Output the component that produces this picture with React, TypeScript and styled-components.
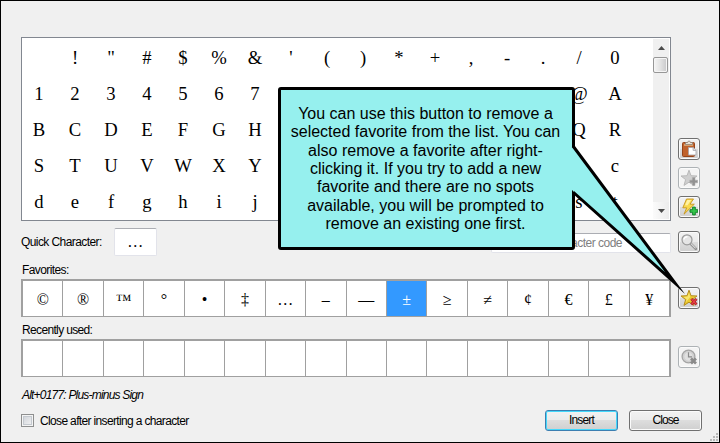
import React from "react";
import styled, { createGlobalStyle, css } from "styled-components";

const GlobalStyle = createGlobalStyle`
  *, *::before, *::after { box-sizing: border-box; }
  body { margin: 0; background: #f0f0f0; }
`;

const Dialog = styled.div`
  position: relative;
  width: 720px;
  height: 443px;
  padding: 36px 0 0 20px;
  overflow: hidden;
  border: 1px solid #000;
  background: #f0f0f0;
  color: #000;
  font: 12px/14px "Liberation Sans", Arial, sans-serif;
`;

const Row = styled.div<{ $height: number }>`
  display: grid;
  grid-template-columns: 650px 22px;
  column-gap: 7px;
  height: ${(p) => p.$height}px;
`;

const CharacterPanel = styled.div`
  display: grid;
  grid-template-columns: 1fr 16px;
  grid-template-rows: 180px;
  height: 184px;
  padding: 1px 1px 1px 0;
  overflow: hidden;
  border: 1px solid #828790;
  background: #fff;
`;

const CharacterGrid = styled.div`
  display: grid;
  grid-template-columns: repeat(17, 36px);
  grid-auto-rows: 36px;
  margin-left: -1px;
  font: 18.67px/37px "Liberation Serif", "Times New Roman", serif;
  text-align: center;
`;

const Scrollbar = styled.div`
  display: flex;
  flex-direction: column;
  background: #f0f0f0;
`;

const ArrowBox = styled.div<{ $bottom?: boolean }>`
  display: grid;
  place-items: center;
  height: 17px;
  ${(p) =>
    p.$bottom &&
    css`
      margin-top: auto;
      background: linear-gradient(90deg, #fbfbfb, #ececec);
    `}
`;

const Thumb = styled.div`
  width: 15px;
  height: 16px;
  margin-top: 1px;
  border: 1px solid #979797;
  border-radius: 2px;
  background: linear-gradient(90deg, #f5f5f5, #e2e2e2 50%, #c8c8ca);
  box-shadow: inset 0 0 0 1px #f5f5f5;
`;

const ToolColumn = styled.div`
  display: flex;
  flex-direction: column;
  gap: 7px;
  padding-top: 101px;
`;

const ToolButton = styled.button<{ $disabled?: boolean; $top?: number }>`
  display: grid;
  place-items: center;
  width: 22px;
  height: 22px;
  margin: ${(p) => p.$top ?? 0}px 0 0;
  padding: 0;
  border: 1px solid ${(p) => (p.$disabled ? "#adb2b5" : "#707070")};
  border-radius: 3px;
  background: ${(p) =>
    p.$disabled ? "#f4f4f4" : "linear-gradient(#f2f2f2, #ebebeb 50%, #dddddd 50%, #cfcfcf)"};
  box-shadow: inset 0 0 0 1px #fbfbfb;
  svg { display: block; width: 18px; height: 18px; }
`;

const Text = styled.span<{ $spacing: number; $italic?: boolean }>`
  letter-spacing: ${(p) => p.$spacing}px;
  font-style: ${(p) => (p.$italic ? "italic" : "normal")};
  white-space: nowrap;
`;

const QuickRow = styled.div`
  display: flex;
  align-items: center;
  height: 28px;
  margin-top: 7px;
`;

const QuickBox = styled.div`
  width: 43px;
  height: 28px;
  margin-left: 12px;
  border: 1px solid #e2e3ea;
  border-top-color: #abadb3;
  border-radius: 2px;
  background: #fff;
  font: 16px/25px "Liberation Serif", "Times New Roman", serif;
  text-align: center;
`;

const CodeInput = styled.div`
  width: 180px;
  height: 20px;
  margin: 2px 0 0 auto;
  padding: 2px 48px 0 0;
  border: 1px solid #e2e3ea;
  border-top-color: #abadb3;
  border-radius: 2px;
  background: #fff;
  color: #808080;
  text-align: right;
`;

const Strip = styled.div`
  display: grid;
  grid-template-columns: repeat(16, 1fr);
  grid-template-rows: 35px;
  gap: 1px;
  height: 38px;
  border: 1px solid #a0a0a0;
  border-width: 2px 2px 1px;
  background: #a0a0a0;
`;

const Cell = styled.div<{ $selected?: boolean }>`
  overflow: hidden;
  background: ${(p) => (p.$selected ? "#3399ff" : "#fff")};
  color: ${(p) => (p.$selected ? "#fff" : "#000")};
  font: 16px/37px "Liberation Serif", "Times New Roman", serif;
  text-align: center;
`;

const SectionLabel = styled.div<{ $height: number; $top: number }>`
  height: ${(p) => p.$height}px;
  padding: ${(p) => p.$top}px 0 0 1px;
`;

const Footer = styled.div`
  display: flex;
  align-items: center;
  width: 681px;
  height: 22px;
  margin-top: 6px;
`;

const CheckBox = styled.span`
  width: 13px;
  height: 13px;
  margin: 1px 6px 0 0;
  border: 1px solid #8e8f8f;
  background: linear-gradient(135deg, #cbcfd5, #f6f6f6);
  box-shadow: inset 0 0 0 1px #f4f4f4, inset 0 0 0 2px #c4c9cf;
`;

const CheckText = styled(Text)`
  padding-top: 2px;
`;

const PushButton = styled.button<{ $primary?: boolean }>`
  width: 73px;
  height: 21px;
  margin: 0 0 0 11px;
  padding: 0;
  border: 1px solid ${(p) => (p.$primary ? "#3c7fb1" : "#707070")};
  border-radius: 3px;
  background: linear-gradient(#f2f2f2, #ebebeb 50%, #dddddd 50%, #cfcfcf);
  box-shadow: inset 0 0 0 ${(p) => (p.$primary ? "1px #45d8fb" : "1px #fbfbfb")};
  color: #000;
  font: 12px/18px "Liberation Sans", Arial, sans-serif;
  &:first-of-type { margin-left: auto; }
`;

const Grip = styled.svg`
  position: absolute;
  right: 1px;
  bottom: 1px;
`;

const Callout = styled.div`
  position: absolute;
  left: 277px;
  top: 86px;
  width: 297px;
  height: 163px;
  padding: 15px 2px 0 0;
  border: 3px solid #000;
  border-radius: 3px;
  background: #96f0ee;
  font: 16px/18.35px "Liberation Sans", Arial, sans-serif;
  text-align: center;
  white-space: pre;
`;

const Tail = styled.svg`
  position: absolute;
  left: 290px;
  top: 50px;
`;

const ROWS = [
  " !\"#$%&'()*+,-./0",
  "123456789:;<=>?@A",
  "BCDEFGHIJKLMNOPQR",
  "STUVWXYZ[\\]^_`abc",
  "defghijklmnopqrst",
];
const FAVORITES = ["©", "®", "™", "°", "•", "‡", "…", "–", "—", "±", "≥", "≠", "¢", "€", "£", "¥"];
const MESSAGE = [
  "You can use this button to remove a",
  "selected favorite from the list. You can",
  "also remove a favorite after right-",
  "clicking it. If you try to add a new",
  "favorite and there are no spots",
  "available, you will be prompted to",
  "remove an existing one first.",
].join("\n");

const STAR = "M9 1.2 11 6.7 17 7 12.4 10.6 14 16.4 9 13.2 4 16.4 5.6 10.6 1 7 7 6.7Z";

const ClipboardIcon = () => (
  <svg viewBox="0 0 18 18">
    <rect x="2.5" y="2.5" width="12" height="14" rx="1" fill="#c0622c" stroke="#96451a" />
    <path d="M4 4h9v2H4z" fill="#d8a06c" />
    <path d="M5.5 4.5v-2h2l1-1.5h1l1 1.5h2v2z" fill="#e9e2d4" stroke="#8d8277" strokeWidth=".8" />
    <path d="M8.5 7.5h4.6l2.9 2.9v4.6H8.5z" fill="#fff" stroke="#a3a3aa" strokeWidth=".8" />
    <path d="M13.1 7.5v2.9H16" fill="#e4e4e8" stroke="#a3a3aa" strokeWidth=".8" />
  </svg>
);

const AddStarIcon = () => (
  <svg viewBox="0 0 18 18">
    <path d={STAR} fill="#cfcfcf" stroke="#b4b4b4" strokeWidth=".9" />
    <path d="M12.4 8.6h2.6v2.6h2.6v2.6H15v2.6h-2.6v-2.6H9.8v-2.6h2.6z" fill="#929292" stroke="#aaa" strokeWidth=".5" />
  </svg>
);

const AddQuickIcon = () => (
  <svg viewBox="0 0 18 18">
    <path d="M6.5 1h7L10 6.2h4.3L4 16.2 6.7 9.8H2.8z" fill="#f9d94d" stroke="#c6951f" strokeWidth=".9" />
    <path d="M7.3 2h3.8L7.5 7.2H5z" fill="#fff2a3" />
    <path d="M12.6 9.1h2.7v2.6h2.5v2.6h-2.5v2.6h-2.7v-2.6H10v-2.6h2.6z" fill="#35c44a" stroke="#087e24" strokeWidth=".9" />
  </svg>
);

const SearchIcon = () => (
  <svg viewBox="0 0 18 18">
    <path d="m10.5 10.5 5.3 5.3" stroke="#8d8d8d" strokeWidth="2.6" strokeLinecap="round" />
    <path d="m10.8 10.5 4.8 4.8" stroke="#d8d8d8" strokeWidth="1.1" />
    <circle cx="7" cy="6.8" r="5" fill="#e5e5e5" stroke="#9b9b9b" strokeWidth="1.2" />
    <path d="M4 6.5C4 4.8 5.5 3.7 7.5 3.8" fill="none" stroke="#fff" strokeWidth="1.5" />
  </svg>
);

const RemoveStarIcon = () => (
  <svg viewBox="0 0 18 18">
    <path d={STAR} fill="#ebc92e" stroke="#b48d20" strokeWidth="1" />
    <path d="M9 3.5 10.2 8 5.7 13.6 6.6 10.3 3.5 8 7.6 7.5z" fill="#f8e670" />
    <path d="m11.3 9.9 5.2 5.6m0-5.6-5.2 5.6" stroke="#a92027" strokeWidth="2.7" />
    <path d="m11.5 10.1 4.8 5.2m0-5.2-4.8 5.2" stroke="#ed4348" strokeWidth="1.2" />
  </svg>
);

const ClearRecentIcon = () => (
  <svg viewBox="0 0 18 18">
    <circle cx="8.5" cy="8.5" r="6.4" fill="#d5d5d5" stroke="#a5a5a5" strokeWidth="1.3" />
    <circle cx="8.5" cy="8.5" r="4.7" fill="#e0e0e0" stroke="#c2c2c2" strokeWidth=".6" />
    <path d="M8.5 4.2v4.6h3.6" fill="none" stroke="#8a8a8a" strokeWidth="1.2" />
    <path d="m11 10.5 5 5m0-5-5 5" stroke="#8b8b8b" strokeWidth="2.7" />
  </svg>
);

const Arrow = ({ up }: { up?: boolean }) => (
  <svg width="7" height="4" viewBox="0 0 7 4">
    <path d={up ? "M0 4 3.5 0 7 4z" : "M0 0h7L3.5 4z"} fill="#4b4b4b" />
  </svg>
);

export default function App() {
  return (
    <>
      <GlobalStyle />
      <Dialog>
        <Row $height={184}>
          <CharacterPanel>
            <CharacterGrid>
              {ROWS.flatMap((row) => row.split("")).map((ch, i) => (
                <span key={i}>{ch}</span>
              ))}
            </CharacterGrid>
            <Scrollbar>
              <ArrowBox><Arrow up /></ArrowBox>
              <Thumb />
              <ArrowBox $bottom><Arrow /></ArrowBox>
            </Scrollbar>
          </CharacterPanel>
          <ToolColumn>
            <ToolButton aria-label="Paste"><ClipboardIcon /></ToolButton>
            <ToolButton $disabled aria-label="Add favorite"><AddStarIcon /></ToolButton>
            <ToolButton aria-label="Set quick character"><AddQuickIcon /></ToolButton>
          </ToolColumn>
        </Row>

        <Row $height={35}>
          <QuickRow>
            <Text $spacing={-0.58}>Quick Character:</Text>
            <QuickBox>…</QuickBox>
            <CodeInput><Text $spacing={-0.5}>Character code</Text></CodeInput>
          </QuickRow>
          <ToolButton $top={10} aria-label="Search"><SearchIcon /></ToolButton>
        </Row>

        <SectionLabel $height={23} $top={7}><Text $spacing={-0.6}>Favorites:</Text></SectionLabel>
        <Row $height={38}>
          <Strip>
            {FAVORITES.map((ch) => <Cell key={ch} $selected={ch === "±"}>{ch}</Cell>)}
          </Strip>
          <ToolButton $top={8} aria-label="Remove favorite"><RemoveStarIcon /></ToolButton>
        </Row>

        <SectionLabel $height={22} $top={6}><Text $spacing={-0.65}>Recently used:</Text></SectionLabel>
        <Row $height={38}>
          <Strip>{FAVORITES.map((ch) => <Cell key={ch} />)}</Strip>
          <ToolButton $disabled $top={7} aria-label="Clear recent"><ClearRecentIcon /></ToolButton>
        </Row>

        <SectionLabel $height={26} $top={11}>
          <Text $italic $spacing={-0.8}>Alt+0177: Plus-minus Sign</Text>
        </SectionLabel>
        <Footer>
          <CheckBox />
          <CheckText $spacing={-0.65}>Close after inserting a character</CheckText>
          <PushButton $primary><Text $spacing={-0.8}>Insert</Text></PushButton>
          <PushButton><Text $spacing={-0.9}>Close</Text></PushButton>
        </Footer>

        <Grip width="8" height="8" viewBox="0 0 8 8" fill="#b8b8b8">
          <path d="M6 0h2v2H6zM3 3h2v2H3zM6 3h2v2H6zM0 6h2v2H0zM3 6h2v2H3zM6 6h2v2H6z" />
        </Grip>

        <Callout>
          {MESSAGE}
          <Tail width="125" height="160" viewBox="571 140 125 160">
            <path d="M570 144.8 575 150 575 192 570 189z" fill="#96f0ee" />
            <path d="M573 146 675 283 573 192z" fill="#96f0ee" />
            <path d="M573 146 675 283 573 192" fill="none" stroke="#000" strokeWidth="3" strokeMiterlimit="20" />
          </Tail>
        </Callout>
      </Dialog>
    </>
  );
}
